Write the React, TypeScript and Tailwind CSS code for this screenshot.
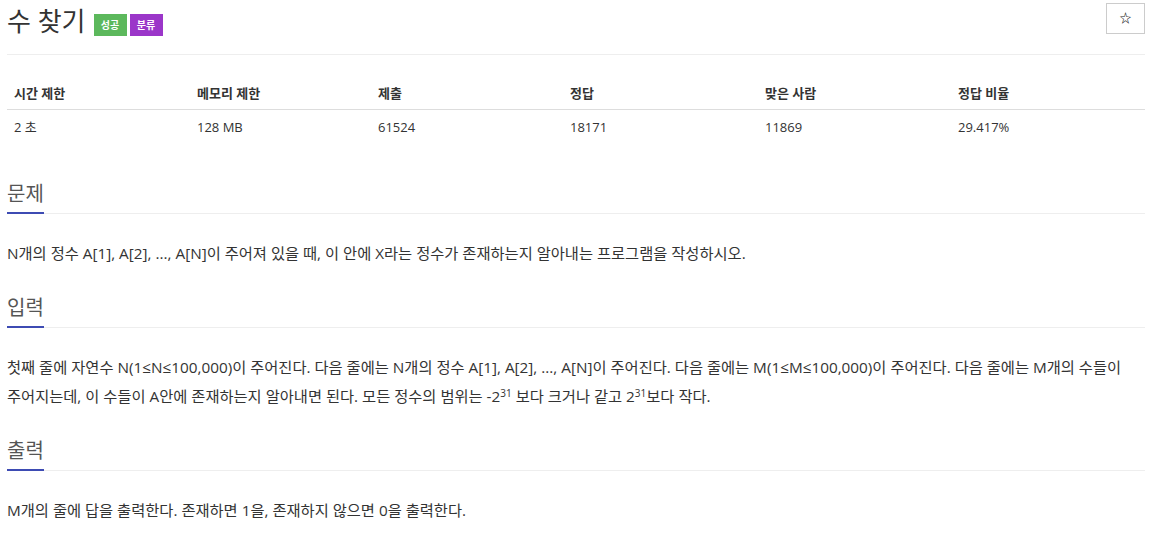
const font = { fontFamily: '"Open Sans", "Noto Sans CJK KR", sans-serif' };

const stats = [
  { label: "시간 제한", value: "2 초", w: "w-[183px]" },
  { label: "메모리 제한", value: "128 MB", w: "w-[181px]" },
  { label: "제출", value: "61524", w: "w-[192px]" },
  { label: "정답", value: "18171", w: "w-[195px]" },
  { label: "맞은 사람", value: "11869", w: "w-[193px]" },
  { label: "정답 비율", value: "29.417%", w: "flex-1" },
];

const SectionTitle = ({ title }: { title: string }) => (
  <div className="flex border-b border-[#eee]">
    <h2 className="-mb-px border-b-2 border-[#3d4bb3] pt-[2px] pb-[6px] text-[20px] leading-[24px] font-normal text-[#555]">
      {title}
    </h2>
  </div>
);

export default function App() {
  return (
    <div className="min-h-screen bg-white px-[7px] text-[#333]" style={font}>
      {/* Title */}
      <div className="flex h-[55px] items-start justify-between border-b border-[#eee]">
        <div className="flex items-end pt-[3px]">
          <h1 className="text-[26px] leading-[36px] font-normal text-[#333]">수 찾기</h1>
          <div className="mb-[3px] ml-[8px] flex gap-[3px]">
            <span className="flex h-[22px] w-[33px] items-center justify-center bg-[#5cb85c] text-[10px] font-bold text-white">
              성공
            </span>
            <span className="flex h-[22px] w-[33px] items-center justify-center bg-[#9b36c9] text-[10px] font-bold text-white">
              분류
            </span>
          </div>
        </div>
        <button className="mt-[3px] flex h-[31px] w-[39px] items-center justify-center border border-[#ccc] bg-white text-[12px] font-bold text-[#222]">
          ☆
        </button>
      </div>

      {/* Stats table */}
      <div className="mt-[23px] text-[13px]">
        <div className="flex h-[32px] items-center border-b border-[#ddd] font-bold">
          {stats.map((s) => (
            <div key={s.label} className={`${s.w} px-[7px]`}>
              {s.label}
            </div>
          ))}
        </div>
        <div className="flex h-[36px] items-center">
          {stats.map((s) => (
            <div key={s.label} className={`${s.w} px-[7px]`}>
              {s.value}
            </div>
          ))}
        </div>
      </div>

      {/* 문제 */}
      <div className="mt-[34px]">
        <SectionTitle title="문제" />
        <p className="mt-[25px] text-[15.3px] leading-[29px] break-keep">
          N개의 정수 A[1], A[2], ..., A[N]이 주어져 있을 때, 이 안에 X라는 정수가 존재하는지 알아내는 프로그램을 작성하시오.
        </p>
      </div>

      {/* 입력 */}
      <div className="mt-[26px]">
        <SectionTitle title="입력" />
        <p className="mt-[25px] text-[15.3px] leading-[29px] break-keep">
          첫째 줄에 자연수 N(1≤N≤100,000)이 주어진다. 다음 줄에는 N개의 정수 A[1], A[2], ..., A[N]이 주어진다. 다음 줄에는 M(1≤M≤100,000)이 주어진다. 다음 줄에는 M개의 수들이 주어지는데, 이 수들이 A안에 존재하는지 알아내면 된다. 모든 정수의 범위는 -2
          <sup className="text-[10px]">31</sup> 보다 크거나 같고 2<sup className="text-[10px]">31</sup>보다 작다.
        </p>
      </div>

      {/* 출력 */}
      <div className="mt-[26px]">
        <SectionTitle title="출력" />
        <p className="mt-[25px] text-[15.3px] leading-[29px] break-keep">
          M개의 줄에 답을 출력한다. 존재하면 1을, 존재하지 않으면 0을 출력한다.
        </p>
      </div>
    </div>
  );
}
